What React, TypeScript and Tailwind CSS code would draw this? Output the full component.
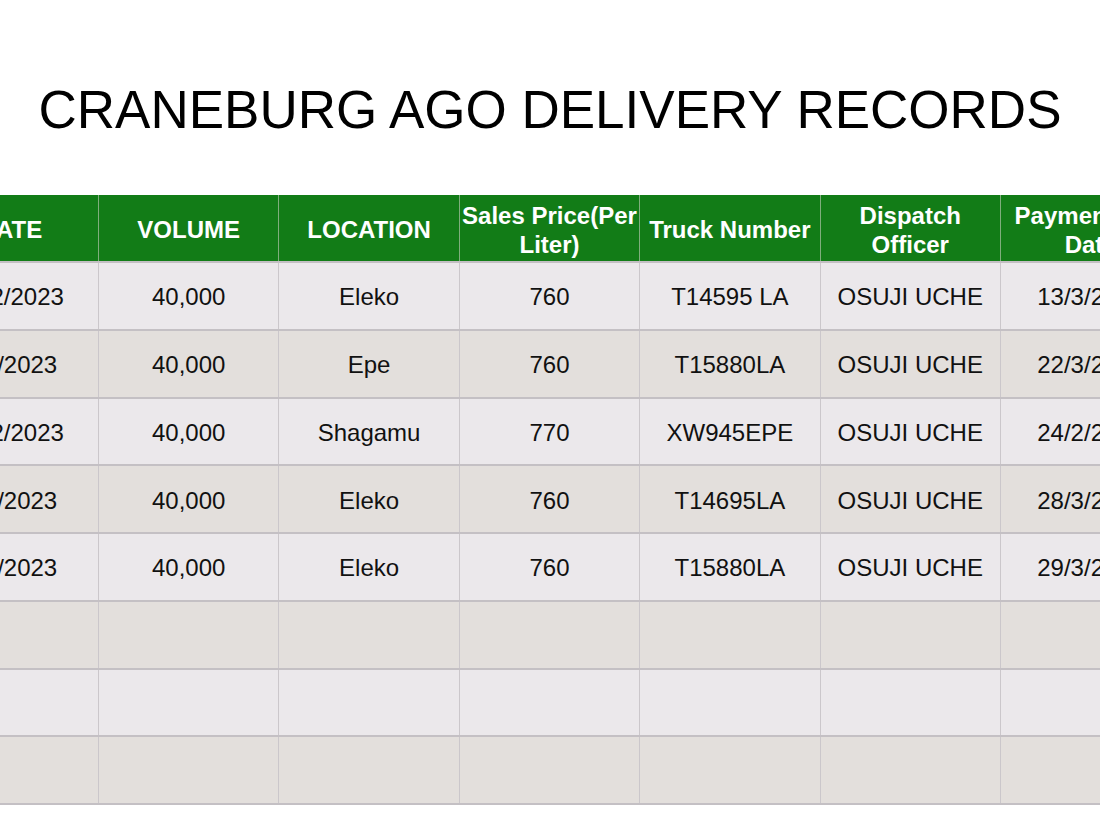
const columns = [
  { label: 'DATE', width: 'w-[176px]' },
  { label: 'VOLUME', width: 'w-[180.4px]' },
  { label: 'LOCATION', width: 'w-[180.4px]' },
  { label: 'Sales Price(Per Liter)', width: 'w-[180.4px]' },
  { label: 'Truck Number', width: 'w-[180.4px]' },
  { label: 'Dispatch Officer', width: 'w-[180.4px]' },
  { label: 'Payment Due Date', width: 'w-[180.4px]' },
];

const records = [
  ['12/2/2023', '40,000', 'Eleko', '760', 'T14595 LA', 'OSUJI UCHE', '13/3/2023'],
  ['8/3/2023', '40,000', 'Epe', '760', 'T15880LA', 'OSUJI UCHE', '22/3/2023'],
  ['22/2/2023', '40,000', 'Shagamu', '770', 'XW945EPE', 'OSUJI UCHE', '24/2/2023'],
  ['9/3/2023', '40,000', 'Eleko', '760', 'T14695LA', 'OSUJI UCHE', '28/3/2023'],
  ['9/3/2023', '40,000', 'Eleko', '760', 'T15880LA', 'OSUJI UCHE', '29/3/2023'],
  ['', '', '', '', '', '', ''],
  ['', '', '', '', '', '', ''],
  ['', '', '', '', '', '', ''],
];

export default function App() {
  return (
    <div className="w-[1100px] h-[825px] bg-white overflow-hidden font-['Liberation_Sans',Arial,sans-serif]">
      {/* Title */}
      <div className="h-[195px] flex items-center justify-center pt-[24px]">
        <h1 className="text-[53px] leading-none text-black">
          CRANEBURG AGO DELIVERY RECORDS
        </h1>
      </div>

      {/* Table, cut off on both sides like the slide */}
      <div className="-ml-[77px] w-max">
        <div className="flex h-[68px] bg-[#127c17] border-b-2 border-[#c3bfc3]">
          {columns.map((col) => (
            <div
              key={col.label}
              className={`${col.width} shrink-0 flex items-center justify-center text-center px-[2px] pt-[3px] border-r border-[#7fae7c] text-white font-bold text-[24px] leading-[29px]`}
            >
              {col.label}
            </div>
          ))}
        </div>

        {records.map((row, i) => (
          <div
            key={i}
            className={`flex h-[67.75px] border-b-2 border-[#c4c0c4] ${i % 2 === 0 ? 'bg-[#ebe8eb]' : 'bg-[#e3dfdc]'}`}
          >
            {row.map((cell, j) => (
              <div
                key={j}
                className={`${columns[j].width} shrink-0 flex items-center justify-center pt-[3px] border-r border-[#cbc7cb] text-[24px] text-[#111] whitespace-nowrap`}
              >
                {cell}
              </div>
            ))}
          </div>
        ))}
      </div>
    </div>
  );
}
